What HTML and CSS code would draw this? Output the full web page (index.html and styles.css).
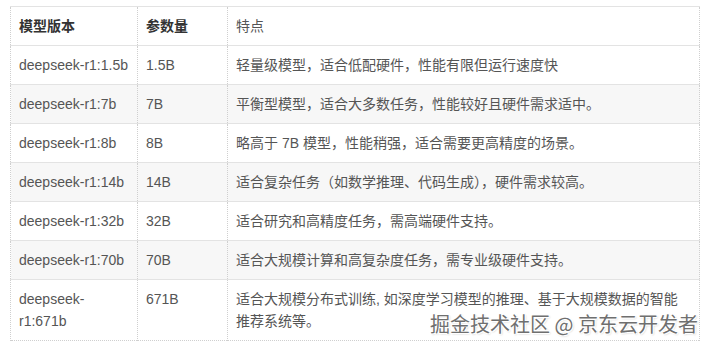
FILE: index.html
```html
<!DOCTYPE html>
<html lang="zh-CN">
<head>
  <meta charset="UTF-8">
  <title>DeepSeek-R1 模型版本</title>
  <link rel="stylesheet" href="styles.css">
</head>
<body>

<div class="wrap">
  <table class="models">
    <colgroup>
      <col class="col-name">
      <col class="col-size">
      <col>
    </colgroup>
    <thead>
      <tr>
        <th>模型版本</th>
        <th>参数量</th>
        <th class="plain">特点</th>
      </tr>
    </thead>
    <tbody>
      <tr>
        <td>deepseek-r1:1.5b</td>
        <td>1.5B</td>
        <td>轻量级模型，适合低配硬件，性能有限但运行速度快</td>
      </tr>
      <tr>
        <td>deepseek-r1:7b</td>
        <td>7B</td>
        <td>平衡型模型，适合大多数任务，性能较好且硬件需求适中。</td>
      </tr>
      <tr>
        <td>deepseek-r1:8b</td>
        <td>8B</td>
        <td>略高于 7B 模型，性能稍强，适合需要更高精度的场景。</td>
      </tr>
      <tr>
        <td>deepseek-r1:14b</td>
        <td>14B</td>
        <td>适合复杂任务（如数学推理、代码生成），硬件需求较高。</td>
      </tr>
      <tr>
        <td>deepseek-r1:32b</td>
        <td>32B</td>
        <td>适合研究和高精度任务，需高端硬件支持。</td>
      </tr>
      <tr>
        <td>deepseek-r1:70b</td>
        <td>70B</td>
        <td>适合大规模计算和高复杂度任务，需专业级硬件支持。</td>
      </tr>
      <tr>
        <td>deepseek-r1:671b</td>
        <td>671B</td>
        <td>适合大规模分布式训练, 如深度学习模型的推理、基于大规模数据的智能推荐系统等。</td>
      </tr>
    </tbody>
  </table>

  <!-- watermark -->
  <div class="watermark">掘金技术社区 @ 京东云开发者</div>
</div>

</body>
</html>
```

FILE: styles.css
```css
body {
  margin: 0;
  padding: 6px 10px;
  background-color: #ffffff;
  font-family: "Liberation Sans", Arial, "Noto Sans CJK SC", sans-serif;
}

.wrap {
  position: relative;
  width: 690px;
}

.models {
  width: 690px;
  border-collapse: collapse;
  table-layout: fixed;
  font-size: 14px;
  line-height: 22px;
  color: #555;
}

.col-name {
  width: 127px;
}

.col-size {
  width: 90px;
}

.models th,
.models td {
  padding: 8px 8px;
  text-align: left;
  vertical-align: top;
  border-left: 1px dotted #cfcfcf;
  border-right: 1px dotted #cfcfcf;
}

.models tr {
  border-top: 1px solid #e3e3e3;
}

.models tbody tr:last-child {
  border-bottom: 1px dotted #cfcfcf;
}

.models th {
  font-weight: bold;
  color: #333;
}

.models th.plain {
  font-weight: normal;
  color: #555;
}

.models tbody tr:nth-child(even) {
  background-color: #f7f7f7;
}

.watermark {
  position: absolute;
  right: 2px;
  bottom: 6px;
  font-family: "Noto Sans CJK SC", sans-serif;
  font-size: 20px;
  line-height: 22px;
  color: #6f6f6f;
  text-shadow: 1px 1px 0 #ffffff, -1px -1px 0 #ffffff, 1px -1px 0 #ffffff, -1px 1px 0 #ffffff, 1px 1px 2px #bbb;
  white-space: nowrap;
}
```
